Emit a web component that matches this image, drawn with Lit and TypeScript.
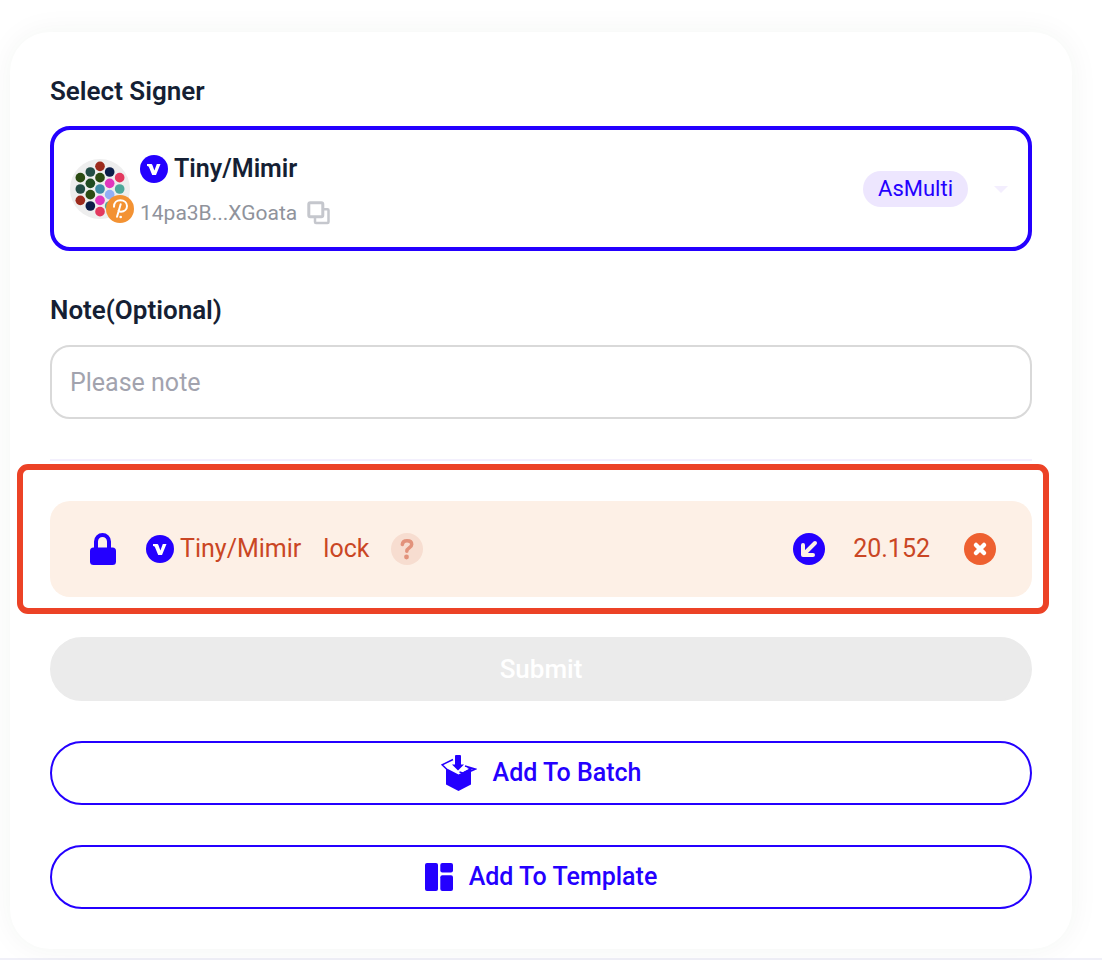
import { LitElement, html, css, svg } from "lit";
import { customElement } from "lit/decorators.js";

const DOTS: [number, number, string][] = [
  [31, 56, "#2b4b12"], [31, 90, "#224c45"], [31, 124, "#9c2a1c"],
  [61, 39, "#224c45"], [61, 73, "#1f4a20"], [61, 107, "#2b4b12"], [61, 141, "#0b1c48"],
  [90, 22, "#9c2a1c"], [90, 56, "#2b4b12"], [90, 90, "#3f8ba8"], [90, 124, "#e136bd"], [90, 158, "#e3395f"],
  [119, 39, "#0b1c48"], [119, 73, "#e136bd"], [119, 107, "#93aff5"], [119, 141, "#4ea89a"],
  [149, 56, "#e3395f"], [149, 90, "#4ea89a"],
];

const verified = html`<svg class="verified" viewBox="0 0 28 28" aria-hidden="true">
  <circle cx="14" cy="14" r="14" fill="#2400ff" />
  <path d="M7 9h4.200q.9 0 1.200.9l2 5.600L16.800 9H20.500L16 20h-3.800L9 12.200Q8.500 11 7 11z" fill="#fff" />
</svg>`;

@customElement("app-root")
export class AppRoot extends LitElement {
  static styles = css`
    :host {
      display: block;
      min-height: 100vh;
      box-sizing: border-box;
      padding: 32px 30px 9px 10px;
      border-bottom: 2px solid #f0f0f8;
      background: #fff;
      color: #151f34;
      font-family: Roboto, "Liberation Sans", sans-serif;
      font-size: 25px;
      line-height: 34px;
    }
    * { box-sizing: border-box; }
    svg { display: block; flex: none; }
    button, input { font: inherit; margin: 0; }
    .card {
      display: flex;
      flex-direction: column;
      gap: 40px;
      padding: 40px;
      border-radius: 40px;
      background: #fff;
      box-shadow: 0 0 30px rgba(16, 60, 40, 0.05);
    }
    .field { display: flex; flex-direction: column; gap: 18px; }
    .label { font-size: 26px; font-weight: 600; padding-top: 2px; }
    .signer {
      display: flex;
      align-items: center;
      gap: 10px;
      height: 125px;
      padding: 0 10px 0 16px;
      border: 4px solid #2400ff;
      border-radius: 20px;
    }
    .avatar { position: relative; }
    .face { width: 60px; height: 60px; }
    .chain { position: absolute; right: -4px; bottom: -4px; width: 28px; height: 28px; }
    .who { flex: 1; display: flex; flex-direction: column; gap: 10px; padding-top: 4px; }
    .name { display: flex; align-items: center; gap: 6px; font-weight: 600; }
    .addr { display: flex; align-items: center; gap: 10px; font-size: 21px; color: #90939c; }
    .verified { width: 28px; height: 28px; }
    .bare { border: 0; padding: 0; background: none; cursor: pointer; }
    .tag {
      padding: 0 15px;
      border-radius: 18px;
      background: #ede6fe;
      color: #2400ff;
      font-size: 22px;
      line-height: 36px;
    }
    .caret { width: 36px; height: 36px; margin-left: 4px; }
    .note {
      width: 100%;
      height: 74px;
      padding: 0 18px;
      border: 2px solid #d9d9d9;
      border-radius: 20px;
      background: #fff;
      color: inherit;
    }
    .note::placeholder { color: #a2a3ae; opacity: 1; }
    .rule { width: 100%; height: 2px; margin: 0; border: 0; background: #f3f0fd; }
    .alert {
      position: relative;
      display: flex;
      align-items: center;
      gap: 22px;
      height: 96px;
      padding: 0 36px 0 40px;
      border-radius: 20px;
      background: #fdf0e6;
      color: #ca4624;
    }
    .alert::after {
      content: "";
      position: absolute;
      inset: -37px -17px -17px -33px;
      border: 6px solid #ec4226;
      border-radius: 11px;
      pointer-events: none;
    }
    .party { display: flex; align-items: center; gap: 6px; margin-left: 8px; }
    .amount { display: flex; align-items: center; gap: 28px; margin-left: auto; }
    .fail { margin-left: 6px; }
    .btn {
      display: flex;
      align-items: center;
      justify-content: center;
      gap: 16px;
      width: 100%;
      height: 64px;
      padding: 0 32px;
      border: 2px solid #2400ff;
      border-radius: 32px;
      background: #fff;
      color: #2400ff;
      font-weight: 500;
      cursor: pointer;
    }
    .submit { border-color: #ebebeb; background: #ebebeb; color: #fff; font-size: 26px; cursor: default; }
  `;

  render() {
    return html`
      <main class="card">
        <section class="field" aria-labelledby="signer">
          <div class="label" id="signer">Select Signer</div>
          <div class="signer">
            <div class="avatar">
              <svg class="face" viewBox="0 0 180 180" aria-hidden="true">
                <circle cx="90" cy="90" r="90" fill="#eee" />
                ${DOTS.map(([x, y, c]) => svg`<circle cx=${x} cy=${y} r="14.500" fill=${c} />`)}
              </svg>
              <svg class="chain" viewBox="0 0 84 84" aria-hidden="true">
                <circle cx="42" cy="42" r="42" fill="#f39233" />
                <path d="M24 35C24 23 32 16 43 16c12 0 20 7 20 17s-8 17-18 17c-3 0-6-1-8-2M44 28L33 65" fill="none" stroke="#fff" stroke-width="6" stroke-linecap="round" />
                <circle cx="44" cy="66" r="4" fill="#fff" />
              </svg>
            </div>
            <div class="who">
              <div class="name">${verified}<span>Tiny/Mimir</span></div>
              <div class="addr">
                <span>14pa3B...XGoata</span>
                <button class="bare" aria-label="Copy address">
                  <svg width="24" height="24" viewBox="0 0 24 24" fill="none" stroke="#c5c7cd" stroke-width="3" stroke-linejoin="round">
                    <rect x="1.800" y="1.800" width="14" height="14" rx="1.500" />
                    <path d="M16 8.200h4.500a1 1 0 0 1 1 1V21a1 1 0 0 1-1 1H9a1 1 0 0 1-1-1v-5" stroke-width="2.500" />
                  </svg>
                </button>
              </div>
            </div>
            <span class="tag">AsMulti</span>
            <button class="bare caret" aria-label="Choose signer">
              <svg width="36" height="36" viewBox="0 0 36 36"><path d="M12 15h14l-7 7z" fill="#f3eefe" /></svg>
            </button>
          </div>
        </section>
        <section class="field">
          <label class="label" for="note">Note(Optional)</label>
          <input class="note" id="note" type="text" placeholder="Please note" />
        </section>
        <hr class="rule" />
        <div class="alert" role="status">
          <svg width="26" height="32" viewBox="0 0 26 32" aria-hidden="true">
            <path d="M6 17V8.500a6.500 6.500 0 0 1 13 0V17" fill="none" stroke="#2400ff" stroke-width="4" />
            <rect y="14.500" width="26" height="17.500" rx="3.500" fill="#2400ff" />
          </svg>
          <span class="party">${verified}<span>Tiny/Mimir</span></span>
          <span>lock</span>
          <svg width="32" height="32" viewBox="0 0 32 32" aria-hidden="true">
            <circle cx="16" cy="16" r="16" fill="#f7ddd0" />
            <path d="M11.300 11.500C11.600 8.800 13.300 7.800 16 7.800c2.900 0 4.700 1.400 4.700 3.700 0 3.400-4.900 3-4.900 6.700" fill="none" stroke="#e2927b" stroke-width="3.500" stroke-linecap="round" />
            <circle cx="15.500" cy="24" r="2.400" fill="#e2927b" />
          </svg>
          <span class="amount">
            <svg width="32" height="32" viewBox="0 0 32 32" aria-hidden="true">
              <circle cx="16" cy="16" r="16" fill="#2400ff" />
              <path d="M22 10L12 20M10 12v10h10" fill="none" stroke="#fdf0e6" stroke-width="4" stroke-linecap="round" stroke-linejoin="round" />
            </svg>
            <span>20.152</span>
            <svg class="fail" width="32" height="32" viewBox="0 0 32 32" aria-hidden="true">
              <circle cx="16" cy="16" r="16" fill="#ee6030" />
              <path d="M12 12l8 8M20 12l-8 8" stroke="#fff" stroke-width="4.500" stroke-linecap="round" />
            </svg>
          </span>
        </div>
        <button class="btn submit" disabled>Submit</button>
        <button class="btn">
          <svg width="36" height="36" viewBox="0 0 36 36" aria-hidden="true">
            <path d="M5 13l12.500 6.500L30 13v16.500L17.500 36 5 29.500z" fill="#2400ff" />
            <path d="M5.500 14L1.200 9.800 12 4.500M24 11l10.500 3L24 18.700 18.500 17M26 12l4 2-7 3.500" fill="none" stroke="#2400ff" stroke-width="1.500" />
            <path d="M14 1q0-1 1-1h4q1 0 1 1v8.500h3L17 15.500 11 9.500h3z" fill="#2400ff" />
          </svg>
          <span>Add To Batch</span>
        </button>
        <button class="btn">
          <svg width="28" height="28" viewBox="0 0 28 28" fill="#2400ff" aria-hidden="true">
            <rect width="13" height="28" rx="2" />
            <rect x="15.300" width="12.700" height="9.500" rx="2" />
            <rect x="15.300" y="12.300" width="12.700" height="15.700" rx="2" />
          </svg>
          <span>Add To Template</span>
        </button>
      </main>
    `;
  }
}
